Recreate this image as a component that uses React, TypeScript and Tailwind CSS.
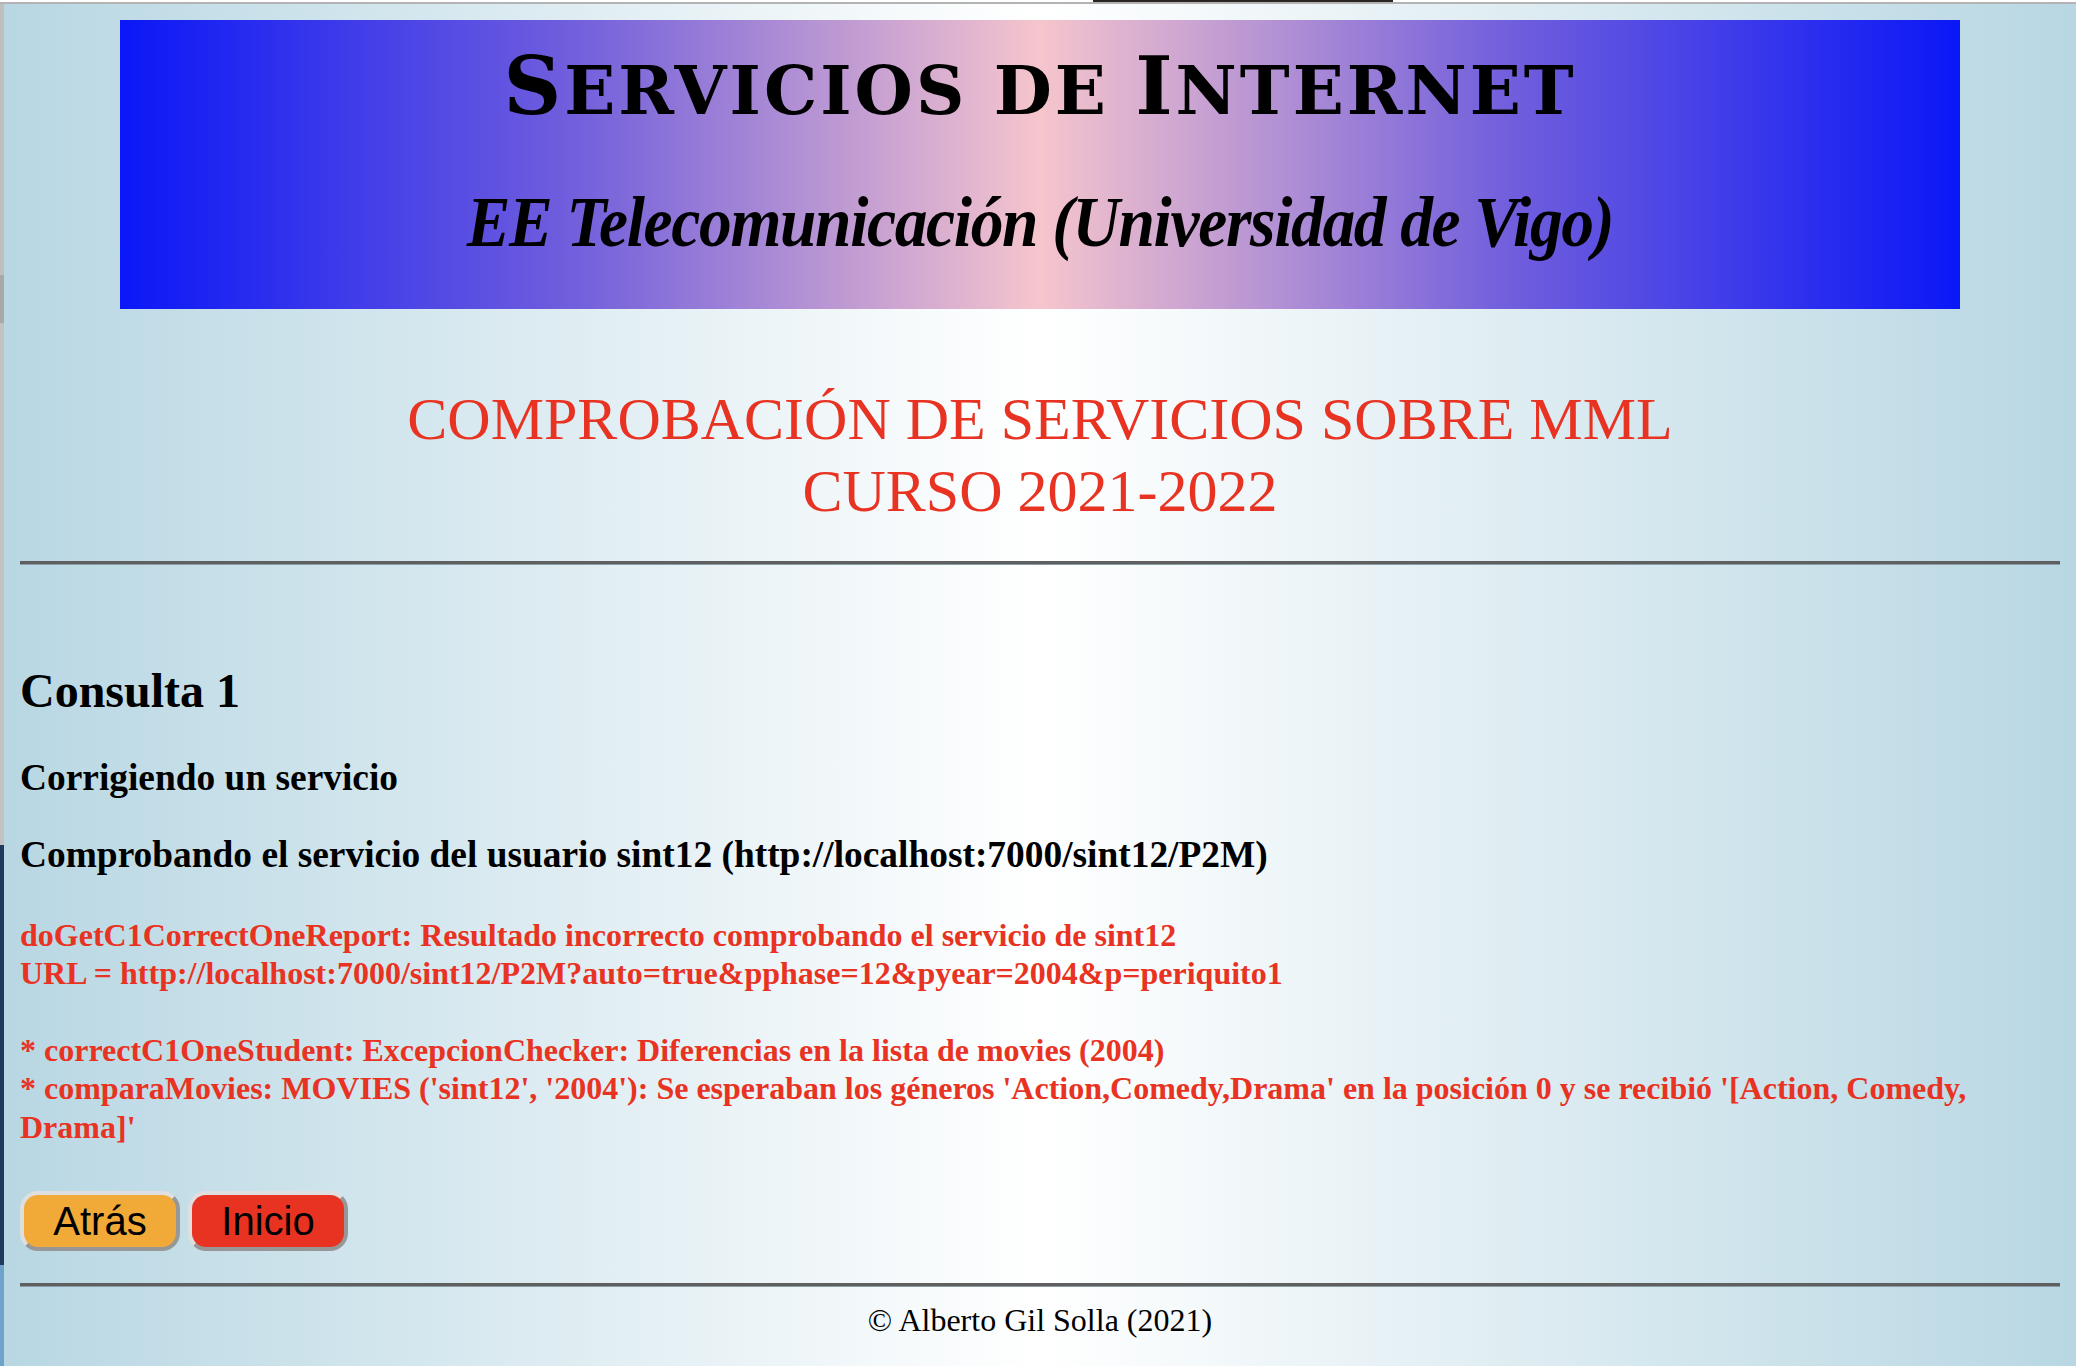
import React from 'react';

const pageBg = 'bg-[linear-gradient(to_right,#b8d7e3_0%,#ffffff_50%,#b8d7e3_100%)]';

const Banner: React.FC = () => (
  <header className="mx-[100px] h-[289px] bg-[linear-gradient(to_right,#0a17f7_0%,#7360dc_25%,#f6c5cc_50%,#7360dc_75%,#0a17f7_100%)] text-black flex flex-col items-center">
    <h1 className="mt-[21px] h-[90px] leading-[90px] text-[67px] font-bold uppercase tracking-[3px] font-['DejaVu_Serif',serif] whitespace-nowrap">
      <span className="text-[80px]">S</span>ervicios de <span className="text-[80px]">I</span>nternet
    </h1>
    <h2 className="mt-[51px] text-[72px] leading-[80px] font-bold italic tracking-[-1.5px] font-['Liberation_Serif',serif] whitespace-nowrap [transform:scaleX(0.91)]">
      EE Telecomunicación (Universidad de Vigo)
    </h2>
  </header>
);

const Rule: React.FC = () => <hr className="border-0 border-t-[3px] border-b border-t-[#5f5f5f] border-b-[#8a9ea6]" />;

const Button: React.FC<{ label: string; color: string }> = ({ label, color }) => (
  <button className={`w-[160px] h-[60px] rounded-[18px] border-4 border-t-[#dfdfdf] border-l-[#dfdfdf] border-r-[#979797] border-b-[#979797] text-[40px] leading-none text-black font-['Liberation_Sans',sans-serif] ${color}`}>
    {label}
  </button>
);

export default function App() {
  return (
    <div className="h-[1366px] w-[2076px] overflow-hidden flex flex-col bg-white font-['Liberation_Serif',serif]">
      <div className="h-[4px] border-b-[2px] border-[#b3b3b3] bg-white flex shrink-0">
        <div className="ml-[1093px] w-[300px] h-[2px] bg-[#2a2522]" />
      </div>
      <div className="flex flex-1">
        <div className="w-[4px] flex flex-col">
          <div className="h-[271px] bg-[#bfbfbf]" />
          <div className="h-[48px] bg-[#a8a8a8]" />
          <div className="h-[522px] bg-[#c2c2c2]" />
          <div className="h-[420px] bg-[#1f3a5c]" />
          <div className="flex-1 bg-[#6fa3c9]" />
        </div>
        <main className={`flex-1 px-[16px] pt-[16px] ${pageBg}`}>
          <Banner />
          <div className="mt-[74px] text-center text-[#e83323] text-[60px] leading-[72px]">
            <div>COMPROBACIÓN DE SERVICIOS SOBRE MML</div>
            <div>CURSO 2021-2022</div>
          </div>
          <div className="mt-[34px]"><Rule /></div>
          <h2 className="mt-[98px] text-[48px] leading-[56px] font-bold text-black">Consulta 1</h2>
          <p className="mt-[37px] text-[37.4px] leading-[43px] font-bold text-black">Corrigiendo un servicio</p>
          <p className="mt-[34px] text-[37.4px] leading-[43px] font-bold text-black">
            Comprobando el servicio del usuario sint12 (http://localhost:7000/sint12/P2M)
          </p>
          <div className="mt-[40px] text-[32px] leading-[38.4px] font-bold text-[#e83323]">
            <div>doGetC1CorrectOneReport: Resultado incorrecto comprobando el servicio de sint12</div>
            <div>URL = http://localhost:7000/sint12/P2M?auto=true&amp;pphase=12&amp;pyear=2004&amp;p=periquito1</div>
            <div className="mt-[38px]">* correctC1OneStudent: ExcepcionChecker: Diferencias en la lista de movies (2004)</div>
            <div>* comparaMovies: MOVIES ('sint12', '2004'): Se esperaban los géneros 'Action,Comedy,Drama' en la posición 0 y se recibió '[Action, Comedy, Drama]'</div>
          </div>
          <div className="mt-[45px] flex gap-[8px]">
            <Button label="Atrás" color="bg-[#f1a938]" />
            <Button label="Inicio" color="bg-[#e83323]" />
          </div>
          <div className="mt-[32px]"><Rule /></div>
          <footer className="mt-[15px] text-center text-[32px] leading-[37px] text-black">© Alberto Gil Solla (2021)</footer>
        </main>
      </div>
    </div>
  );
}
